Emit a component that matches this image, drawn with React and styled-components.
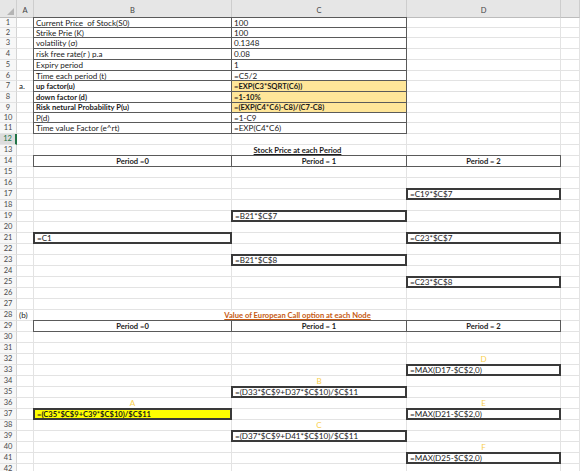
import React from 'react';
import styled, { createGlobalStyle, css } from 'styled-components';

const GlobalStyle = createGlobalStyle`
  html, body {
    margin: 0;
    padding: 0;
    background: #fff;
  }
  body {
    width: 580px;
    height: 471px;
    overflow: hidden;
    font-family: Lato, "Liberation Sans", sans-serif;
  }
`;

const COLS = '17px 17px 198px 175px 154px 1fr';
const GRID = '#e3e3e3';
const FONT = 8.1;
const BOLD_FONT = 7.6;

const Sheet = styled.div`
  display: flex;
  flex-direction: column;
  width: 580px;
  height: 471px;
  overflow: hidden;
`;

const Row = styled.div`
  display: grid;
  grid-template-columns: ${COLS};
  height: ${p => p.$h}px;
  flex: none;
`;

const Corner = styled.div`
  grid-area: 1 / 1;
  background: #e6e6e6;
  border-right: 1px solid #cfcfcf;
  border-bottom: 1px solid #bcbcbc;
  display: flex;
  align-items: flex-end;
  justify-content: flex-end;
  padding: 0 2px 2px 0;
`;

const ColHead = styled.div`
  grid-area: 1 / ${p => p.$col};
  background: #e6e6e6;
  border-right: 1px solid #cdcdcd;
  border-bottom: 1px solid #bcbcbc;
  display: flex;
  align-items: center;
  justify-content: center;
  padding-top: 4px;
  font-size: 7.5px;
  color: #444;
`;

const RowNum = styled.div`
  grid-area: 1 / 1;
  display: flex;
  align-items: center;
  justify-content: center;
  overflow: hidden;
  background: ${p => (p.$active ? '#dcdcdc' : '#f7f7f7')};
  color: ${p => (p.$active ? '#217346' : '#4a4a4a')};
  border-right: ${p => (p.$active ? '2px solid #217346' : '1px solid #d4d4d4')};
  border-bottom: 1px solid ${GRID};
  font-size: 7.5px;
  line-height: 1;
`;

const Cell = styled.div`
  grid-area: 1 / ${p => p.$col};
  display: flex;
  align-items: center;
  justify-content: ${p => (p.$align === 'center' ? 'center' : 'flex-start')};
  padding: 1px 2px 0;
  min-width: 0;
  overflow: hidden;
  white-space: pre;
  line-height: 1;
  border-right: 1px solid ${GRID};
  border-bottom: 1px solid ${GRID};
  background: ${p => p.$fill || 'transparent'};
  font-size: ${p => (p.$bold ? BOLD_FONT : FONT)}px;
  font-weight: ${p => (p.$bold ? 700 : 400)};
  color: ${p => p.$color || '#1b1b1b'};
  ${p =>
    p.$box &&
    css`
      position: relative;
      z-index: 1;
      margin: -1px 0 0 -1px;
      border: ${p.$box === 'node' ? '2px solid #3a3a3a' : '1px solid #5a5a5a'};
    `}
`;

const Title = styled.div`
  grid-area: 1 / 3 / 2 / 6;
  justify-self: center;
  align-self: center;
  position: relative;
  z-index: 2;
  background: #fff;
  padding: 1px 1px 0;
  line-height: 1;
  font-size: ${BOLD_FONT}px;
  font-weight: 700;
  text-decoration: underline;
  white-space: nowrap;
  color: ${p => p.$color || '#1b1b1b'};
`;

const LETTER = '#f9cf4e';

// per-row cell content, keyed by column letter
const data = {
  1: { B: { t: 'Current Price  of Stock(S0)', box: 'thin' }, C: { t: '100', box: 'thin' } },
  2: { B: { t: 'Strike Prie (K)', box: 'thin' }, C: { t: '100', box: 'thin' } },
  3: { B: { t: 'volatility (σ)', box: 'thin' }, C: { t: '0.1348', box: 'thin' } },
  4: { B: { t: 'risk free rate(r ) p.a', box: 'thin' }, C: { t: '0.08', box: 'thin' } },
  5: { B: { t: 'Expiry period', box: 'thin' }, C: { t: '1', box: 'thin' } },
  6: { B: { t: 'Time each period (t)', box: 'thin' }, C: { t: '=C5/2', box: 'thin' } },
  7: {
    A: { t: 'a.' },
    B: { t: 'up factor(u)', box: 'thin', bold: true },
    C: { t: '=EXP(C3*SQRT(C6))', box: 'thin', bold: true, fill: '#ffe699' },
  },
  8: {
    B: { t: 'down factor (d)', box: 'thin', bold: true },
    C: { t: '=1-10%', box: 'thin', bold: true, fill: '#ffe699' },
  },
  9: {
    B: { t: 'Risk netural Probability P(u)', box: 'thin', bold: true },
    C: { t: '=(EXP(C4*C6)-C8)/(C7-C8)', box: 'thin', bold: true, fill: '#ffe699' },
  },
  10: { B: { t: 'P(d)', box: 'thin' }, C: { t: '=1-C9', box: 'thin' } },
  11: { B: { t: 'Time value Factor (e^rt)', box: 'thin' }, C: { t: '=EXP(C4*C6)', box: 'thin' } },
  13: { title: { t: 'Stock Price at each Period' } },
  14: {
    B: { t: 'Period =0', box: 'thin', bold: true, align: 'center' },
    C: { t: 'Period = 1', box: 'thin', bold: true, align: 'center' },
    D: { t: 'Period = 2', box: 'thin', bold: true, align: 'center' },
  },
  17: { D: { t: '=C19*$C$7', box: 'node' } },
  19: { C: { t: '=B21*$C$7', box: 'node' } },
  21: { B: { t: '=C1', box: 'node' }, D: { t: '=C23*$C$7', box: 'node' } },
  23: { C: { t: '=B21*$C$8', box: 'node' } },
  25: { D: { t: '=C23*$C$8', box: 'node' } },
  28: { A: { t: '(b)' }, title: { t: 'Value of European Call option at each Node', color: '#c65911' } },
  29: {
    B: { t: 'Period =0', box: 'thin', bold: true, align: 'center' },
    C: { t: 'Period = 1', box: 'thin', bold: true, align: 'center' },
    D: { t: 'Period = 2', box: 'thin', bold: true, align: 'center' },
  },
  32: { D: { t: 'D', align: 'center', color: LETTER } },
  33: { D: { t: '=MAX(D17-$C$2,0)', box: 'node' } },
  34: { C: { t: 'B', align: 'center', color: LETTER } },
  35: { C: { t: '=(D33*$C$9+D37*$C$10)/$C$11', box: 'node' } },
  36: { B: { t: 'A', align: 'center', color: LETTER }, D: { t: 'E', align: 'center', color: LETTER } },
  37: {
    B: { t: '=(C35*$C$9+C39*$C$10)/$C$11', box: 'node', bold: true, fill: '#ffff00' },
    D: { t: '=MAX(D21-$C$2,0)', box: 'node' },
  },
  38: { C: { t: 'C', align: 'center', color: LETTER } },
  39: { C: { t: '=(D37*$C$9+D41*$C$10)/$C$11', box: 'node' } },
  40: { D: { t: 'F', align: 'center', color: LETTER } },
  41: { D: { t: '=MAX(D25-$C$2,0)', box: 'node' } },
};

const topHeights = [10, 10, 11, 11, 11, 10, 11, 11, 10, 10, 11];
const rowHeight = n => (n <= 11 ? topHeights[n - 1] : 11);
const letters = ['A', 'B', 'C', 'D', 'E'];

const SheetRow = ({ n }) => {
  const row = data[n] || {};
  return (
    <Row $h={rowHeight(n)}>
      <RowNum $active={n === 12}>{n}</RowNum>
      {letters.map((l, i) => {
        const c = row[l] || {};
        return (
          <Cell
            key={l}
            $col={i + 2}
            $box={c.box}
            $bold={c.bold}
            $fill={c.fill}
            $align={c.align}
            $color={c.color}
          >
            {c.t}
          </Cell>
        );
      })}
      {row.title && <Title $color={row.title.color}>{row.title.t}</Title>}
    </Row>
  );
};

export default function App() {
  const rows = Array.from({ length: 42 }, (_, i) => i + 1);
  return (
    <>
      <GlobalStyle />
      <Sheet>
        <Row $h={18}>
          <Corner>
            <svg width="7" height="7" viewBox="0 0 7 7">
              <polygon points="7,0 7,7 0,7" fill="#b4b4b4" />
            </svg>
          </Corner>
          {letters.map((l, i) => (
            <ColHead key={l} $col={i + 2}>
              {l === 'E' ? '' : l}
            </ColHead>
          ))}
        </Row>
        {rows.map(n => (
          <SheetRow key={n} n={n} />
        ))}
      </Sheet>
    </>
  );
}
